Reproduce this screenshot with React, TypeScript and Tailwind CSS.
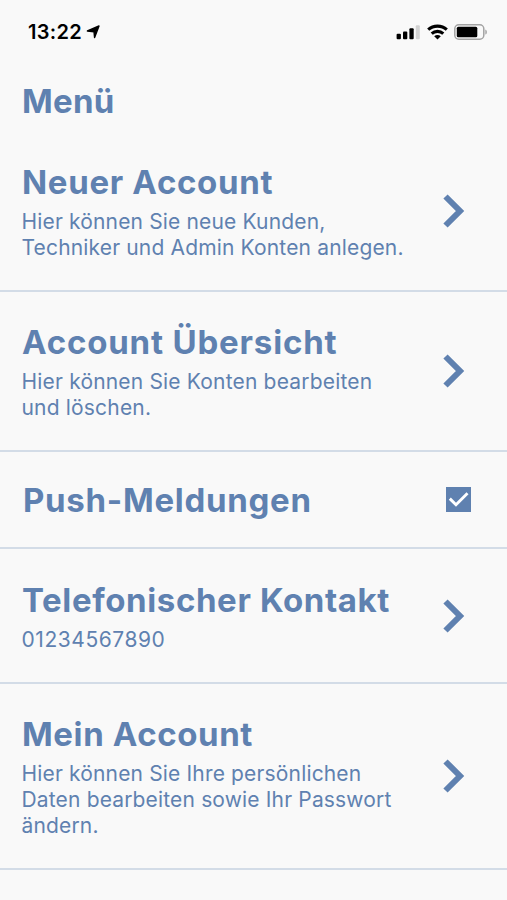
import { useState } from "react";

type MenuItem = {
  title: string;
  lines: string[];
  type: "link" | "toggle";
  rowClass: string;
  titleClass: string;
  textClass?: string;
};

const items: MenuItem[] = [
  {
    title: "Neuer Account",
    lines: ["Hier können Sie neue Kunden,", "Techniker und Admin Konten anlegen."],
    type: "link",
    rowClass: "h-[161px]",
    titleClass: "tracking-[0.68px]",
    textClass: "tracking-[0.16px]",
  },
  {
    title: "Account Übersicht",
    lines: ["Hier können Sie Konten bearbeiten", "und löschen."],
    type: "link",
    rowClass: "h-[160px]",
    titleClass: "tracking-[0.82px]",
    textClass: "tracking-[0.18px]",
  },
  {
    title: "Push-Meldungen",
    lines: [],
    type: "toggle",
    rowClass: "h-[97px]",
    titleClass: "pl-px tracking-[0.72px]",
  },
  {
    title: "Telefonischer Kontakt",
    lines: ["01234567890"],
    type: "link",
    rowClass: "h-[135px]",
    titleClass: "tracking-[0.62px]",
    textClass: "tracking-[0.55px]",
  },
  {
    title: "Mein Account",
    lines: [
      "Hier können Sie Ihre persönlichen",
      "Daten bearbeiten sowie Ihr Passwort",
      "ändern.",
    ],
    type: "link",
    rowClass: "h-[186px]",
    titleClass: "tracking-[0.6px]",
    textClass: "tracking-[0.16px]",
  },
];

function StatusBar() {
  return (
    <div className="flex h-16 items-center justify-between pr-[19px] pl-7 text-black">
      <div className="flex items-center gap-1">
        <span className="text-[20px] leading-6 font-semibold tracking-[0.3px]">13:22</span>
        <svg width="14" height="14" viewBox="0 0 14 14">
          <path
            d="M13 1 8.6 12.6 8 6.7 1.4 6Z"
            stroke="#000"
            strokeWidth="1.4"
            strokeLinejoin="round"
          />
        </svg>
      </div>

      <div className="flex items-center">
        <svg width="24" height="16" viewBox="0 0 24 16">
          <rect x="0.6" y="9.8" width="4.3" height="5.4" rx="1" />
          <rect x="7" y="7.4" width="4.3" height="7.8" rx="1" />
          <rect x="13.4" y="4.2" width="4.3" height="11" rx="1" />
          <rect x="19.8" y="1.2" width="4" height="14" rx="1" fill="#d2d2d2" />
        </svg>
        <svg className="mr-px ml-[7px]" width="21" height="16" viewBox="0 0 21 16">
          <path
            d="M1.2 5.6C6.4.9 14.6.9 19.8 5.6M4.7 9.6c3.3-3 8.3-3 11.6 0"
            fill="none"
            stroke="#000"
            strokeWidth="3.1"
          />
          <path d="M10.5 15.6 7.2 12.3c1.9-1.7 4.7-1.7 6.6 0Z" />
        </svg>
        <svg className="ml-[5px]" width="34" height="16" viewBox="0 0 34 16">
          <rect x="0.8" y="0.8" width="29" height="14.4" rx="4" fill="none" stroke="#a3a3a3" strokeWidth="1.5" />
          <rect x="2.8" y="2.8" width="20.5" height="10.4" rx="1.5" />
          <path d="M31.3 5.4c2.1.8 2.1 4.4 0 5.2Z" fill="#a3a3a3" />
        </svg>
      </div>
    </div>
  );
}

function Chevron() {
  return (
    <svg width="22" height="34" viewBox="0 0 22 34" fill="none">
      <path d="M2.5 2.5 17 17 2.5 31.5" stroke="#5f81b0" strokeWidth="6" />
    </svg>
  );
}

export default function App() {
  const [push, setPush] = useState(true);

  return (
    <main className="h-[900px] w-full overflow-hidden bg-[#f9f9f9] font-[Inter,sans-serif] text-[#5f81b0]">
      <StatusBar />

      <header className="h-[67px] pt-[17px] pl-[22px]">
        <h1 className="text-[33px] leading-[41px] font-bold tracking-[0.3px]">Menü</h1>
      </header>

      {items.map((item) => (
        <section
          key={item.title}
          className={`flex items-center justify-between border-b-2 border-[#d3dce7] pr-[42px] pl-[22px] ${item.rowClass}`}
        >
          <div className="pt-px whitespace-nowrap">
            <h2 className={`text-[33px] leading-[41px] font-bold ${item.titleClass}`}>
              {item.title}
            </h2>
            {item.lines.length > 0 && (
              <p className={`mt-1.5 -ml-[0.5px] text-[21px] leading-[26px] ${item.textClass}`}>
                {item.lines.map((line) => (
                  <span key={line} className="block">
                    {line}
                  </span>
                ))}
              </p>
            )}
          </div>

          {item.type === "link" ? (
            <Chevron />
          ) : (
            <button
              type="button"
              role="checkbox"
              aria-checked={push}
              aria-label={item.title}
              onClick={() => setPush(!push)}
              className="mr-[-6px] flex size-[25px] items-center justify-center bg-[#5f81b0]"
            >
              {push && (
                <svg width="25" height="25" viewBox="0 0 25 25" fill="none">
                  <path d="m3.8 11.6 6.2 6.2L21.5 6.3" stroke="#fff" strokeWidth="2.9" />
                </svg>
              )}
            </button>
          )}
        </section>
      ))}
    </main>
  );
}
